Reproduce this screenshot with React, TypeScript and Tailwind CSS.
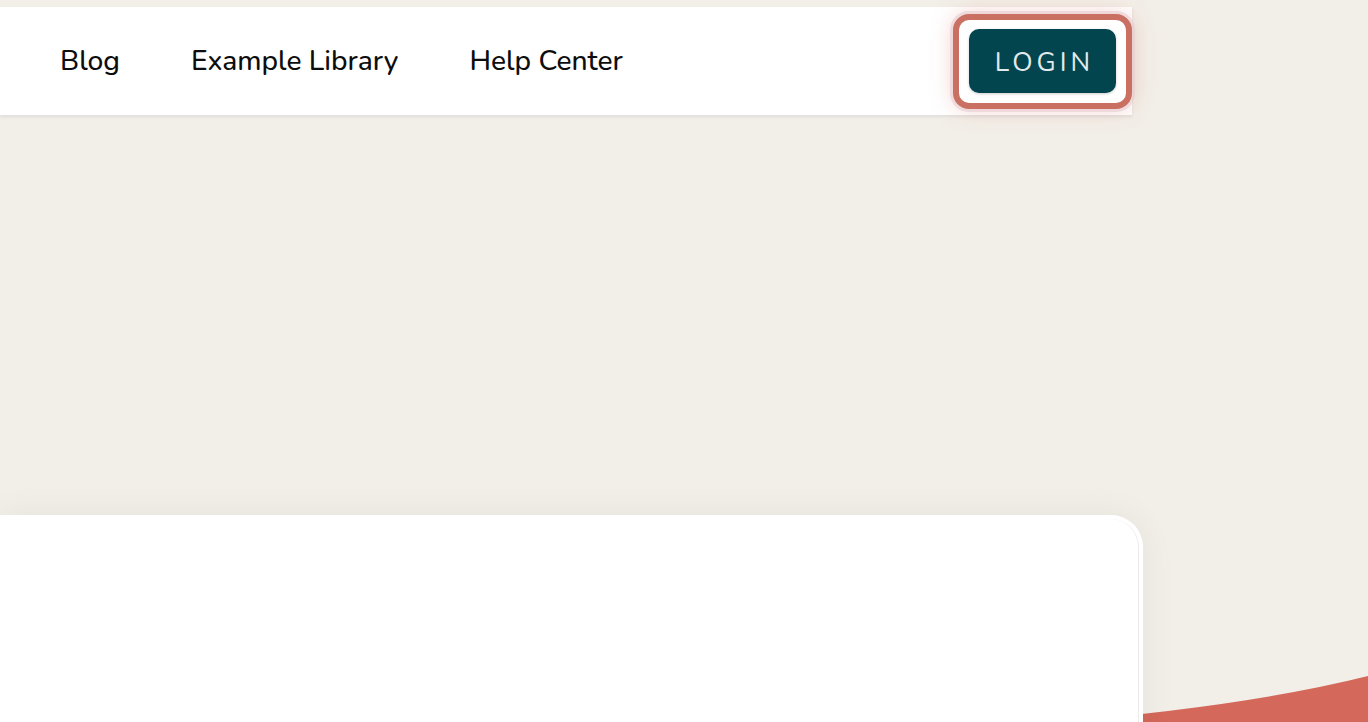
const App = () => {
  const links = ["Blog", "Example Library", "Help Center"];
  return (
    <div className="relative min-h-screen h-[722px] overflow-hidden bg-[#f2efe8] font-['Nunito','Lato',sans-serif]">
      {/* wave in the bottom corner */}
      <svg
        className="absolute bottom-0 left-0"
        width="1368"
        height="100"
        viewBox="0 0 1368 100"
      >
        <path d="M900 110 Q1200 96 1368 54 L1368 110 Z" fill="#d4685a" />
      </svg>

      <header className="pt-[7px] pr-[236px]">
        <nav className="flex h-[108px] items-center bg-white pl-[60px] shadow-[0_2px_3px_rgba(60,60,90,0.09)]">
          <div className="flex items-center gap-[71px] text-[28.2px] font-medium text-[#0d0d0d]">
            {links.map((l) => (
              <a key={l} className="cursor-pointer">
                {l}
              </a>
            ))}
          </div>
          <div className="ml-auto flex h-[95px] w-[179px] items-center justify-center rounded-[16px] border-[6px] border-[#c97062] bg-white shadow-[0_0_0_3px_rgba(232,205,208,0.6),0_0_22px_rgba(215,120,110,0.35)]">
            <button className="flex h-[64px] w-[147px] items-center justify-center rounded-[10px] bg-[#02454e] pt-[3px] pl-[4px] text-[26.5px] tracking-[0.15em] text-[#e1eaec] shadow-[0_1px_3px_rgba(0,0,0,0.2)]">
              LOGIN
            </button>
          </div>
        </nav>
      </header>

      <section className="relative z-10 mt-[400px] mr-[225px] h-[260px] rounded-tr-[32px] bg-white shadow-[0_0_36px_rgba(0,0,0,0.06)]">
        <div className="absolute inset-y-[4px] right-[4px] left-0 rounded-tr-[28px] border-r border-[#ebebeb]" />
      </section>
    </div>
  );
};

export default App;
